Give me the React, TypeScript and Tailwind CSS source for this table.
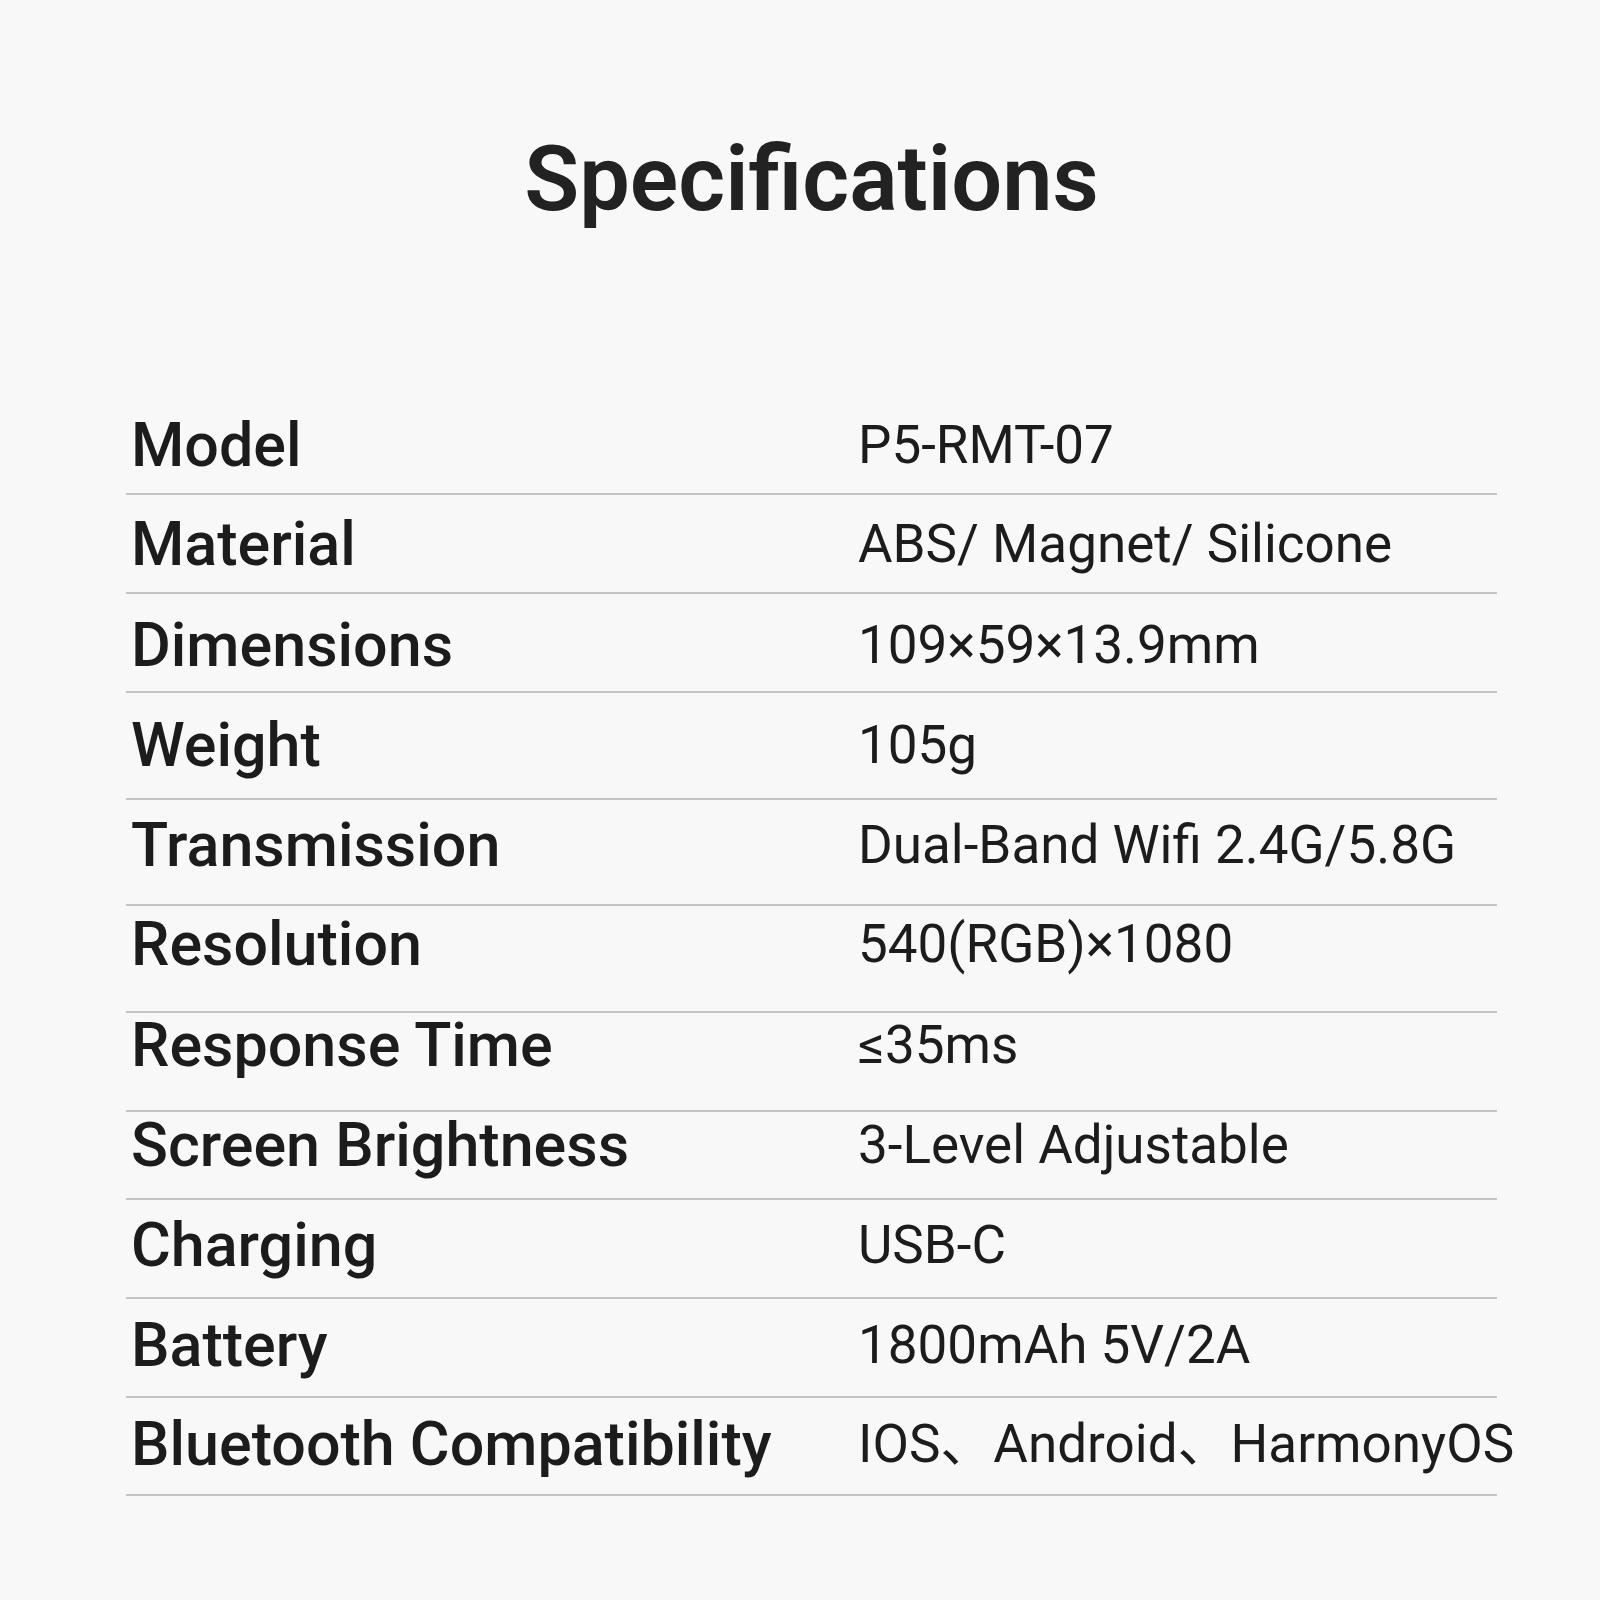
import React from "react";

type Row = { label: string; value: string; pt: string; pb: string };

const rows: Row[] = [
  { label: "Model", value: "P5-RMT-07", pt: "pt-0", pb: "pb-[17px]" },
  { label: "Material", value: "ABS/ Magnet/ Silicone", pt: "pt-[19px]", pb: "pb-[17px]" },
  { label: "Dimensions", value: "109×59×13.9mm", pt: "pt-[21px]", pb: "pb-[15px]" },
  { label: "Weight", value: "105g", pt: "pt-[22px]", pb: "pb-[22px]" },
  { label: "Transmission", value: "Dual-Band Wifi 2.4G/5.8G", pt: "pt-[15px]", pb: "pb-[28px]" },
  { label: "Resolution", value: "540(RGB)×1080", pt: "pt-[8px]", pb: "pb-[36px]" },
  { label: "Response Time", value: "≤35ms", pt: "pt-[2px]", pb: "pb-[34px]" },
  { label: "Screen Brightness", value: "3-Level Adjustable", pt: "pt-[3px]", pb: "pb-[22px]" },
  { label: "Charging", value: "USB-C", pt: "pt-[15px]", pb: "pb-[21px]" },
  { label: "Battery", value: "1800mAh 5V/2A", pt: "pt-[16px]", pb: "pb-[20px]" },
  { label: "Bluetooth Compatibility", value: "IOS、Android、HarmonyOS", pt: "pt-[16px]", pb: "pb-[19px]" },
];

export default function App() {
  return (
    <div
      className="w-[1600px] h-[1600px] bg-[#f8f8f8] text-[#1c1c1c] overflow-hidden"
      style={{ fontFamily: 'Roboto, "Noto Sans CJK SC", sans-serif' }}
    >
      <div className="ml-[126px] w-[1371px] pt-[135px]">
        <h1 className="text-center text-[90px] leading-[90px] font-semibold text-[#222222]">
          Specifications
        </h1>
        <div className="mt-[190px] flex flex-col">
          {rows.map((r) => (
            <div
              key={r.label}
              className={`flex items-start border-b-2 border-[#c4c4c4] ${r.pt} ${r.pb}`}
            >
              <div className="w-[732px] shrink-0 pl-[5px] text-[61px] leading-[61px] font-medium whitespace-nowrap">
                {r.label}
              </div>
              <div className="mt-[4px] text-[53px] leading-[53px] font-normal whitespace-nowrap">
                {r.value}
              </div>
            </div>
          ))}
        </div>
      </div>
    </div>
  );
}
